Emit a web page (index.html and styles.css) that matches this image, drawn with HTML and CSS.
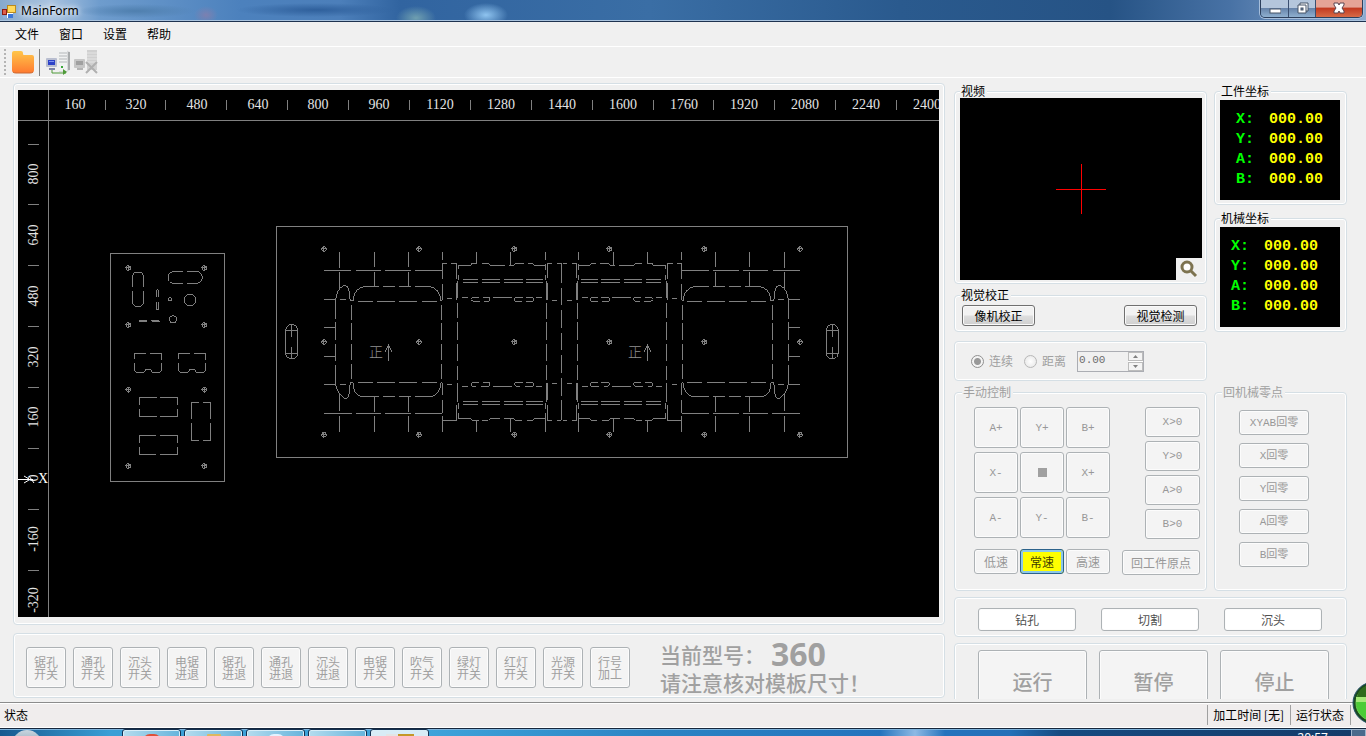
FILE: index.html
```html
<!DOCTYPE html>
<html lang="zh-CN">
<head>
<meta charset="utf-8">
<title>MainForm</title>
<link rel="stylesheet" href="styles.css">
</head>
<body>
<header class="titlebar">
  <svg class="app-icon" width="14" height="14" viewBox="0 0 14 14" aria-hidden="true">
    <rect x="5" y="0" width="9" height="8" fill="#b98a1d"/><rect x="6" y="1" width="7" height="6" fill="#ffd95a"/>
    <rect x="0" y="4" width="5" height="6" fill="#8d1c10"/><rect x="1" y="5" width="3" height="4" fill="#e0604a"/>
    <rect x="5" y="8" width="6" height="5" fill="#fff"/><rect x="6" y="9" width="5" height="4" fill="#3c78d8"/>
    <path d="M1 11h3v2h-3zM12 9h2v2h-2z" fill="#8fb1de"/>
  </svg>
  <h1 class="title">MainForm</h1>
  <div class="window-buttons">
    <button class="wb wb-min" aria-label="最小化"><svg width="12" height="18" viewBox="0 0 12 18"><rect x="1" y="9" width="11" height="4" fill="#fff" stroke="#465468"/></svg></button>
    <button class="wb wb-max" aria-label="还原"><svg width="13" height="18" viewBox="0 0 13 18"><path d="M4 3h8v8h-2v2H2V5h2z" fill="#fff" stroke="#465468"/><path d="M4 5h6v6" fill="none" stroke="#465468"/><rect x="5" y="8" width="2" height="2" fill="#7890b0" stroke="#465468"/></svg></button>
    <button class="wb wb-close" aria-label="关闭"><svg width="14" height="18" viewBox="0 0 14 18"><path d="M2 3h4l1 2 1-2h4v2l-2 3 2 3v2H8l-1-2-1 2H2v-2l2-3-2-3z" fill="#fff" stroke="#5b4450"/></svg></button>
  </div>
</header>

<nav class="menubar">
  <button>文件</button><button>窗口</button><button>设置</button><button>帮助</button>
</nav>

<div class="toolbar">
  <span class="grip"></span>
  <button class="tool" aria-label="打开"><svg width="24" height="26" viewBox="0 0 24 26">
    <defs><linearGradient id="fold" x1="0" y1="0" x2="0" y2="1"><stop offset="0" stop-color="#ffc64a"/><stop offset="1" stop-color="#ff7a30"/></linearGradient></defs>
    <path d="M1 4q0-2 2-2h7q2 0 2 2v1q0 1 1 1h8q2 0 2 2v13q0 3-3 3H4q-3 0-3-3z" fill="url(#fold)"/><path d="M2 23q1 1 3 1h14q2 0 3-1" fill="none" stroke="#c96a35"/></svg></button>
  <span class="tool-sep"></span>
  <button class="tool" aria-label="连接"><svg width="26" height="26" viewBox="0 0 26 26">
    <path d="M14 1h7l4 2v18l-3 2h-8z" fill="#d8dadb"/><path d="M14 1h8v21h-8z" fill="#f0f2f2"/><path d="M14 4h8M14 7h8M14 10h8M14 13h8" stroke="#b4b8ba"/><path d="M24 3v18" stroke="#a8acad" stroke-width="2"/>
    <rect x="1" y="9" width="11" height="9" rx="1" fill="#b9bed0"/><rect x="3" y="11" width="7" height="5" fill="#2d42c8"/><path d="M4 12h5v1H4z" fill="#7f93f0"/><path d="M4 19h6v2H4z" fill="#7d84a8"/>
    <path d="M7 21v3h14" fill="none" stroke="#4e9a38"/><path d="M18 20l4 3-4 3z" fill="#4e9a38"/><path d="M16 17h2v2h-2z" fill="#38a838"/></svg></button>
  <button class="tool" disabled aria-label="断开"><svg width="26" height="26" viewBox="0 0 26 26">
    <path d="M14 1h10v20H14z" fill="#d0d0d0"/><path d="M14 4h10M14 7h10M14 10h10M14 13h10" stroke="#e4e4e4"/>
    <rect x="1" y="10" width="11" height="9" rx="1" fill="#c6c6c6"/><rect x="3" y="12" width="7" height="4" fill="#a0a0a0"/><path d="M4 19h6v2H4z" fill="#b4b4b4"/>
    <path d="M13 13l11 11M24 13L13 24" stroke="#b0b0b0" stroke-width="2"/></svg></button>
</div>

<main class="main">
  <section class="left">
    <div class="group canvas-group">
      <svg class="canvas" viewBox="18 90 921 527" preserveAspectRatio="xMinYMin meet" role="img" aria-label="加工图">
        <defs>
          <g id="hole"><circle r="7"/><path d="M-9 0H9M0-9V9"/></g>
          <g id="half">
            <path d="M208 96V144M208 157V208M313 96V142M313 157V198M415 96V142M415 157V198M517 96V121M517 133V178M517 193V241M619 96V130M721 96V136M826 96V121M826 133V150M826 164V180"/>
            <path d="M208 523V573M208 588V635M313 530V576M313 588V635M415 530V576M415 588V635M517 490V525M517 539V578M517 588V635M619 602V635M721 596V635M826 550V568M826 578V635"/>
            <path d="M162 151H243M258 151H333M345 151H423M435 151H517M162 580H246M258 580H333M345 580H423M435 580H517"/>
            <path d="M162 238H197M210 238H228M162 322H197M162 409H197M162 493H197M210 493H228"/>
            <path d="M197 297V238Q202 206 219 198Q238 190 238 226L241 243H250M197 306V360M197 372V423M197 435V493Q203 524 225 536Q238 536 238 510L241 488H250"/>
            <path d="M249 244Q251 201 290 199H327M339 199H375M387 199H423M435 199H477Q512 206 512 242H517"/>
            <path d="M249 488Q250 524 273 529H327M339 529H375M387 529H423M435 529H488Q511 520 513 488H517"/>
            <path d="M264 244H309M321 244H375M387 244H441M456 244H502M264 487H309M321 487H375M387 487H441M456 487H502"/>
            <path d="M244 255V300M244 309V360M244 372V420M244 432V477M514 255V300M514 309V360M514 372V420M514 432V477"/>
            <path d="M531 235H546M531 493H546M517 130H531M543 130H560V178M560 190V240M517 601H560V555"/>
            <path d="M562 183V234M562 250V293M562 306V360M562 372V423M562 438V480M562 490V547M565 164V180M565 550V568"/>
            <path d="M565 148V136H603L606 130H622M636 130H655L660 136H706M718 136H733L736 130H762M774 130H788L791 136H826"/>
            <path d="M565 578V596H603L606 601H627M636 601H655L660 596H690M702 596H733L736 601H756M771 601H788L791 596H826"/>
            <path d="M579 178H624M636 178H690M702 178H759M768 178H819M579 187H624M636 187H690M702 187H759M768 187H819"/>
            <path d="M579 544H624M636 544H690M702 544H759M768 544H819M579 553H624M636 553H690M702 553H759M768 553H819"/>
            <path d="M576 232H594M669 232H726M798 232H816M576 499H594M669 499H726M798 499H816"/>
            <path d="M627 232H609L602 238L609 244H630M639 232H657L660 235V241L657 244H642M759 232H736L733 235V241L736 244H756M768 232H788L792 238L788 244H768"/>
            <path d="M627 487H607L604 490V496L607 499H618M639 487H657L660 490V496L657 499H633M759 487H736L733 490L738 499H750M768 487H788L792 493L788 499H765"/>
            <path d="M829 183V240M829 250V297M829 306V360M829 372V423M829 435V480M829 490V545M832 130V174M832 190V240M832 490V540M832 555V601"/>
            <path d="M832 130H846M860 130H872M846 241H861M846 490H861M832 601H846M860 601H872"/>
            <path d="M47 331Q49 314 65 314Q81 314 83 331V400Q81 416 65 416Q49 416 47 400zM47 331H83M47 400H83M65 314V350M65 380V418"/>
          </g>
        </defs>
        <g class="axis">
          <path d="M18 120.500H939M48.500 90V617"/>
          <path d="M105.500 100v10M165.500 100v10M226.500 100v10M287.500 100v10M348.500 100v10M409.500 100v10M470.500 100v10M531.500 100v10M592.500 100v10M653.500 100v10M713.500 100v10M774.500 100v10M835.500 100v10M896.500 100v10"/>
          <path d="M28 144.500h11M28 204.500h11M28 265.500h11M28 326.500h11M28 387.500h11M28 448.500h11M28 509.500h11M28 570.500h11"/>
        </g>
        <g class="scale">
          <text x="75" y="109">160</text><text x="136" y="109">320</text><text x="197" y="109">480</text><text x="258" y="109">640</text><text x="318" y="109">800</text><text x="379" y="109">960</text><text x="440" y="109">1120</text><text x="501" y="109">1280</text><text x="562" y="109">1440</text><text x="623" y="109">1600</text><text x="684" y="109">1760</text><text x="744" y="109">1920</text><text x="805" y="109">2080</text><text x="866" y="109">2240</text><text x="927" y="109">2400</text>
        </g>
        <g class="scale" transform="rotate(-90)">
          <text x="-174" y="38">800</text><text x="-235" y="38">640</text><text x="-296" y="38">480</text><text x="-357" y="38">320</text><text x="-417" y="38">160</text><text x="-478" y="38">0</text><text x="-539" y="38">-160</text><text x="-600" y="38">-320</text>
        </g>
        <path class="origin" d="M18 479.500H33M24 476l5 3M24 483l5-3M29 476l5 7"/>
        <text class="origin-label" x="43" y="483">X</text>

        <g class="part" transform="translate(100 240) scale(.33333)">
          <path d="M31 40H374V724H31z"/>
          <use href="#hole" x="85" y="84"/><use href="#hole" x="313" y="84"/><use href="#hole" x="85" y="255"/><use href="#hole" x="313" y="255"/>
          <use href="#hole" x="85" y="449"/><use href="#hole" x="313" y="449"/><use href="#hole" x="85" y="678"/><use href="#hole" x="313" y="678"/>
          <path d="M97 140V112Q98 96 114 96Q130 96 131 112V140M97 153V183Q99 200 114 200Q129 200 131 183V153"/>
          <path d="M249 94H221Q205 97 204 112Q205 128 221 130H249M261 94H290Q306 97 307 112Q306 128 290 130H261"/>
          <path d="M169 172V152L173 149L176 152V172M169 186V208H176V186"/>
          <circle cx="210" cy="178" r="5"/><circle cx="270" cy="180" r="17"/><circle cx="219" cy="238" r="11"/>
          <path d="M117 241H141M117 244H141M154 241H177M156 244H180"/>
          <path d="M103 357V340H138M150 340H185V360M103 370V391L110 397H133L138 388H152L157 397H178L185 391V370"/>
          <path d="M235 357V340H270M282 340H317V360M235 370V391L242 397H265L270 388H284L289 397H310L317 391V370"/>
          <path d="M118 495V472H171M180 472H233V495M118 507V529H171M180 529H233V507"/>
          <path d="M118 609V586H168M180 586H233V609M118 621V643H168M180 643H233V621"/>
          <path d="M274 537V487H297M309 487H332V537M274 549V601H297M309 601H332V549"/>
        </g>

        <g class="part" transform="translate(270 220) scale(.33333)">
          <path d="M19 19H1733V713H19z"/>
          <use href="#half"/>
          <use href="#half" transform="translate(1752 0) scale(-1 1)"/>
          <path d="M875 130V188M875 205V255M875 270V323M875 339V390M875 405V458M875 475V527M875 541V601"/>
          <use href="#hole" x="162" y="87"/><use href="#hole" x="447" y="87"/><use href="#hole" x="733" y="87"/><use href="#hole" x="1018" y="87"/><use href="#hole" x="1303" y="87"/><use href="#hole" x="1590" y="87"/>
          <use href="#hole" x="162" y="366"/><use href="#hole" x="447" y="366"/><use href="#hole" x="733" y="366"/><use href="#hole" x="1018" y="366"/><use href="#hole" x="1303" y="366"/><use href="#hole" x="1590" y="366"/>
          <use href="#hole" x="162" y="644"/><use href="#hole" x="447" y="644"/><use href="#hole" x="733" y="644"/><use href="#hole" x="1018" y="644"/><use href="#hole" x="1303" y="644"/><use href="#hole" x="1590" y="644"/>
          <path d="M355 423V373M345 395L355 376L366 395M1132 423V373M1122 395L1132 376L1143 395"/>
        </g>
        <g class="mark"><text x="376" y="357">正</text><text x="635" y="357">正</text></g>
      </svg>
    </div>

    <div class="group switch-group">
      <div class="switches">
        <button disabled>锯孔<br>开关</button><button disabled>通孔<br>开关</button><button disabled>沉头<br>开关</button><button disabled>电锯<br>进退</button><button disabled>锯孔<br>进退</button><button disabled>通孔<br>进退</button><button disabled>沉头<br>进退</button><button disabled>电锯<br>开关</button><button disabled>吹气<br>开关</button><button disabled>绿灯<br>开关</button><button disabled>红灯<br>开关</button><button disabled>光源<br>开关</button><button disabled>行号<br>加工</button>
      </div>
      <div class="notice">
        <p>当前型号：<strong>360</strong></p>
        <p>请注意核对模板尺寸！</p>
      </div>
    </div>
  </section>

  <section class="right">
    <div class="row">
      <div class="col-a">
        <fieldset class="video-group">
          <legend>视频</legend>
          <div class="video">
            <svg class="cross" width="50" height="50" viewBox="0 0 50 50" aria-hidden="true"><path d="M0 25.500H50M25.500 0V50"/></svg>
            <button class="zoom-btn" aria-label="放大"><svg width="18" height="18" viewBox="0 0 18 18"><circle cx="7" cy="7" r="5" fill="#fff" stroke="#7d7350" stroke-width="3"/><path d="M11 11l5 5" stroke="#7d7350" stroke-width="3"/></svg></button>
          </div>
        </fieldset>
        <fieldset class="calib">
          <legend>视觉校正</legend>
          <div class="calib-row"><button class="btn">像机校正</button><button class="btn">视觉检测</button></div>
        </fieldset>
      </div>
      <div class="col-b">
        <fieldset class="coords"><legend>工件坐标</legend>
          <dl class="readout"><dt>X:</dt><dd>000.00</dd><dt>Y:</dt><dd>000.00</dd><dt>A:</dt><dd>000.00</dd><dt>B:</dt><dd>000.00</dd></dl>
        </fieldset>
        <fieldset class="coords"><legend>机械坐标</legend>
          <dl class="readout machine"><dt>X:</dt><dd>000.00</dd><dt>Y:</dt><dd>000.00</dd><dt>A:</dt><dd>000.00</dd><dt>B:</dt><dd>000.00</dd></dl>
        </fieldset>
      </div>
    </div>

    <div class="group step-group">
      <label><input type="radio" name="step" checked disabled>连续</label>
      <label><input type="radio" name="step" disabled>距离</label>
      <div class="spin">
        <input type="text" value="0.00" disabled aria-label="距离值">
        <div class="spin-btns"><button disabled aria-label="增加"><svg width="5" height="3" viewBox="0 0 5 3"><path d="M0 3L2.500 0L5 3z"/></svg></button><button disabled aria-label="减少"><svg width="5" height="3" viewBox="0 0 5 3"><path d="M0 0L2.500 3L5 0z"/></svg></button></div>
      </div>
    </div>

    <div class="row">
      <fieldset class="jog">
        <legend>手动控制</legend>
        <div class="jog-body">
          <div class="jog-left">
            <div class="jog-pad">
              <button disabled>A+</button><button disabled>Y+</button><button disabled>B+</button>
              <button disabled>X-</button><button disabled aria-label="停"><span class="stop"></span></button><button disabled>X+</button>
              <button disabled>A-</button><button disabled>Y-</button><button disabled>B-</button>
            </div>
            <div class="speeds"><button disabled>低速</button><button class="active">常速</button><button disabled>高速</button></div>
          </div>
          <div class="jog-right">
            <button disabled>X&gt;0</button><button disabled>Y&gt;0</button><button disabled>A&gt;0</button><button disabled>B&gt;0</button>
            <button class="origin-btn" disabled>回工件原点</button>
          </div>
        </div>
      </fieldset>
      <fieldset class="home">
        <legend>回机械零点</legend>
        <div class="home-list">
          <button disabled>XYAB回零</button><button disabled>X回零</button><button disabled>Y回零</button><button disabled>A回零</button><button disabled>B回零</button>
        </div>
      </fieldset>
    </div>

    <div class="group modes"><button disabled>钻孔</button><button disabled>切割</button><button disabled>沉头</button></div>
    <div class="group runs"><button disabled>运行</button><button disabled>暂停</button><button disabled>停止</button></div>
  </section>
</main>

<footer class="status">
  <span class="status-text">状态</span><span class="cell">加工时间 [无]</span><span class="cell">运行状态</span><span class="cell end"></span>
</footer>

<div class="taskbar">
  <span class="orb"></span>
  <div class="tasks">
    <span class="task"><i class="t-red"></i></span><span class="task"><i class="t-folder"></i></span><span class="task"><i class="t-blue"></i></span><span class="task"></span><span class="task on"><i class="t-win"></i></span>
  </div>
  <span class="clock">20:57</span><span class="desk"></span>
</div>
<svg class="ball" width="14" height="44" viewBox="0 0 14 44" aria-hidden="true">
  <circle cx="22" cy="22" r="21" fill="#1c4a20" stroke="#24506a"/><circle cx="22" cy="22" r="18" fill="#4ccc36" stroke="#6ad050"/>
  <path d="M5 16Q7 7 14 5V16z" fill="#2f6b1c"/><path d="M4 16H14V21H4z" fill="#a5ea78"/>
</svg>
</body>
</html>
```
FILE: styles.css
```css
* { box-sizing: border-box; }
body {
  margin: 0;
  height: 100vh;
  display: flex;
  flex-direction: column;
  position: relative;
  overflow: hidden;
  background: #f0f0f0;
  color: #000;
  font: 12px/14px "Noto Sans CJK SC", sans-serif;
}
button, input {
  font: inherit;
  color: inherit;
  margin: 0;
  padding: 0;
}
p, dl, dd, h1 { margin: 0; }
svg { display: block; }

/* title bar */
.titlebar {
  height: 22px;
  flex: none;
  display: flex;
  align-items: flex-start;
  padding: 0 3px 0 2px;
  border-bottom: 1px solid #1f3350;
  box-shadow: inset 0 -1px 0 #a9c3de;
  background:
    radial-gradient(ellipse 20px 12px at 416px 18px, #6f9fb0, transparent),
    radial-gradient(ellipse 22px 12px at 486px 15px, #8fc4f0, transparent),
    radial-gradient(ellipse 12px 9px at 206px 15px, #7c80b0, transparent),
    radial-gradient(ellipse 60px 7px at 136px 11px, #4f7fae, transparent),
    radial-gradient(ellipse 80px 7px at 316px 10px, #2f609c, transparent),
    linear-gradient(90deg, #86a9cc 0, #a9c3e0 50px, #6e9ccd 100px, #4c81bd 240px, #4c7fba 340px, #3164a0 400px, #3a6ea5 650px, #2a5a8e 900px, #265385 1110px, #4872a5 1230px, #8fabd0 100%);
}
.app-icon { margin-top: 5px; }
.title {
  flex: 1;
  margin: 3px 0 0 5px;
  font: 12px/16px "Noto Sans", sans-serif;
  text-shadow: 0 0 5px #fff, 0 0 8px #fff;
}
.window-buttons {
  display: flex;
  height: 18px;
  border: 1px solid #2c3f5c;
  border-top: 0;
  border-radius: 0 0 5px 5px;
  box-shadow: 0 0 0 1px #a6bedb;
  overflow: hidden;
}
.wb {
  width: 28px;
  border: 0;
  border-right: 1px solid #3a4f70;
  background: linear-gradient(#b4c6dc 0 45%, #6784aa 50%, #8fb0d0);
  display: flex;
  justify-content: center;
}
.wb-max { width: 27px; }
.wb-close { width: 46px; border-right: 0; background: linear-gradient(#e5a496 0 40%, #c33c22 50%, #d86a46); }

/* menu and tool bar */
.menubar {
  height: 25px;
  flex: none;
  display: flex;
  padding: 0 5px;
  border-bottom: 1px solid #fff;
}
.menubar button { border: 0; background: none; padding: 0 10px; }
.toolbar {
  height: 31px;
  flex: none;
  display: flex;
  align-items: center;
  padding: 0 0 0 4px;
  border-bottom: 1px solid #fff;
}
.grip { width: 2px; height: 26px; margin-right: 5px; background: repeating-linear-gradient(#b4b4b4 0 2px, transparent 2px 4px); }
.tool { border: 0; background: none; margin-right: 2px; }
.tool-sep { width: 1px; height: 27px; margin: 0 5px 0 2px; background: #808080; }

/* work area */
.main {
  flex: 1;
  min-height: 0;
  display: flex;
  gap: 9px;
  padding: 5px 19px 3px 13px;
}
.left {
  flex: 1;
  min-width: 0;
  display: flex;
  flex-direction: column;
  gap: 8px;
  padding-bottom: 1px;
}
.right {
  flex: none;
  width: 393px;
  min-height: 0;
  padding-top: 1px;
  overflow: hidden;
}
.group, fieldset {
  border: 1px solid #d5dfe5;
  border-radius: 4px;
  box-shadow: inset 0 0 0 1px #fff;
}
fieldset { margin: 0; min-width: 0; padding: 0 5px; }
legend { padding: 0 2px 0 1px; line-height: 14px; background: #f0f0f0; }

.canvas-group { flex: 1; min-height: 0; padding: 6px 5px 7px 4px; }
.canvas { width: 100%; height: 100%; background: #000; }
.axis, .part { fill: none; stroke: #808080; shape-rendering: crispEdges; }
.part { stroke-width: 3px; }
.scale { fill: #e4e4e4; font: 14px "Liberation Serif", serif; text-anchor: middle; }
.mark { fill: #909090; font: 300 14px "Noto Sans CJK SC", sans-serif; text-anchor: middle; }
.origin { fill: none; stroke: #fff; }
.origin-label { fill: #fff; font: 14px "Liberation Serif", serif; text-anchor: middle; }

/* disabled push buttons */
.switches button, .jog button, .home button, .modes button, .runs button {
  border: 1px solid #adb2b5;
  border-radius: 3px;
  background: #f4f4f4;
  box-shadow: inset 0 0 0 1px #fcfcfc;
  color: #a0a0a0;
}
.switch-group {
  display: flex;
  align-items: center;
  gap: 30px;
  height: 65px;
  padding: 6px 12px 2px;
}
.switches { display: flex; gap: 7px; }
.switches button { width: 40px; height: 41px; line-height: 12px; white-space: nowrap; }
.notice { color: #a0a0a0; font-size: 21px; font-weight: 500; line-height: 28px; white-space: nowrap; }
.notice p { display: flex; align-items: center; height: 28px; }
.notice strong { margin-left: 6px; font: bold 32px/28px "Noto Sans", sans-serif; }

/* right column */
.row { display: flex; gap: 7px; }
.col-a { width: 253px; display: flex; flex-direction: column; gap: 4px; }
.col-b { width: 133px; display: flex; flex-direction: column; gap: 6px; }
.video-group { padding: 0 4px 3px 5px; }
.video {
  position: relative;
  height: 182px;
  background: #000;
  display: flex;
  align-items: center;
  justify-content: center;
}
.cross { stroke: #f00; shape-rendering: crispEdges; }
.zoom-btn {
  position: absolute;
  right: 0;
  bottom: 0;
  width: 26px;
  height: 22px;
  border: 0;
  background: #f0f0f0;
  display: flex;
  align-items: center;
  justify-content: center;
}
.calib-row { display: flex; justify-content: space-between; padding: 3px 4px 5px 2px; }
.btn {
  width: 73px;
  height: 21px;
  border: 1px solid #707070;
  border-radius: 3px;
  background: linear-gradient(#f2f2f2 0 45%, #dddddd 55%, #cfcfcf);
  box-shadow: inset 0 0 0 1px #fafafa;
}
.coords { padding: 2px 6px 4px 5px; }
.readout {
  height: 100px;
  padding: 10px 0 0 16px;
  background: #000;
  display: grid;
  grid-template-columns: 33px 1fr;
  grid-auto-rows: 20px;
  font: bold 15px/20px "Liberation Mono", monospace;
}
.readout.machine { padding-left: 11px; }
.readout dt { color: #0f0; }
.readout dd { color: #ff0; }

.step-group {
  width: 253px;
  height: 40px;
  margin: 9px 0 4px;
  padding: 0 16px;
  display: flex;
  align-items: center;
  color: #a0a0a0;
}
.step-group label { display: flex; align-items: center; margin-right: 11px; }
.step-group input[type="radio"] {
  appearance: none;
  width: 13px;
  height: 13px;
  margin-right: 5px;
  border: 1px solid #b8b8b8;
  border-radius: 50%;
  background: radial-gradient(#fff, #e4e4e4);
}
.step-group input[type="radio"]:checked { border-color: #909090; background: radial-gradient(#999 0 3px, #f4f4f4 4px); }
.spin {
  width: 67px;
  height: 21px;
  border: 1px solid #abadb3;
  display: flex;
  background: #fff;
}
.spin input {
  flex: 1;
  min-width: 0;
  border: 0;
  background: #f0f0f0;
  color: #6d6d6d;
  padding: 0 0 3px 1px;
  font: 11px/14px "Liberation Mono", monospace;
}
.spin-btns { width: 15px; display: flex; flex-direction: column; gap: 1px; }
.spin-btns button {
  flex: 1;
  border: 1px solid #bcbcbc;
  background: #f4f4f4;
  display: flex;
  align-items: center;
  justify-content: center;
}
.spin-btns path { fill: #808080; }

.jog, .home { color: #a0a0a0; }
.jog { width: 253px; padding: 0 6px 0 7px; }
.jog-body { display: flex; justify-content: space-between; padding: 8px 0 15px 12px; }
.jog button, .home button { font: 11px/14px "Liberation Mono", "Noto Sans CJK SC", monospace; color: #989898; }
.jog-left { display: flex; flex-direction: column; gap: 11px; }
.jog-pad { display: grid; grid-template-columns: repeat(3, 44px); grid-auto-rows: 41px; gap: 4px 2px; }
.stop { display: block; width: 9px; height: 9px; margin: 0 auto; background: #a0a0a0; }
.speeds { display: grid; grid-template-columns: repeat(3, 44px); gap: 2px; }
.jog .speeds button, .jog .origin-btn { height: 25px; font: 12px/14px "Noto Sans CJK SC", sans-serif; }
.jog .speeds .active {
  border: 1px solid #2c628b;
  background: #ff0;
  color: #404000;
  box-shadow: inset 0 0 0 2px #8cc8e8;
}
.jog-right { display: flex; flex-direction: column; align-items: flex-end; gap: 4px; }
.jog-right button { width: 55px; height: 30px; }
.jog .origin-btn { width: 78px; margin-top: 7px; }
.home { width: 133px; padding: 0 7px; }
.home-list { display: flex; flex-direction: column; gap: 8px; padding: 11px 0 0 17px; }
.home button { width: 70px; height: 25px; white-space: nowrap; }

.modes { margin: 6px 0; height: 40px; padding: 10px 23px; display: flex; gap: 25px; }
.modes button { width: 98px; height: 23px; background: #fff; color: #505050; }
.runs { height: 90px; padding: 6px 0 0 23px; display: flex; gap: 12px; }
.runs button { width: 109px; height: 64px; font-size: 20px; font-weight: 500; line-height: 24px; }

/* status bar and task bar */
.status {
  height: 26px;
  flex: none;
  display: flex;
  align-items: center;
  padding: 0 0 0 4px;
  border-top: 1px solid #8c8c8c;
  border-bottom: 1px solid #fff;
  box-shadow: inset 0 1px 0 #fff;
  background: #f0eded;
}
.status-text { flex: 1; }
.cell { height: 20px; padding: 0 6px 0 5px; border-left: 1px solid #a0a0a0; line-height: 20px; white-space: nowrap; }
.cell.end { width: 16px; padding: 0; }
.taskbar {
  height: 8px;
  flex: none;
  display: flex;
  overflow: hidden;
  border-top: 1px solid #16273d;
  box-shadow: inset 0 1px 0 #7fb4dc;
  background: linear-gradient(90deg, #17598f 0, #3a9fd6 110px, #3ea3da 430px, #2c84c4 650px, #2473bd 880px, #8db9e4 915px, #2473bd 945px, #2470b8 1010px, #164a80 1060px, #143a68 100%);
}
.orb { width: 30px; height: 30px; margin: 1px 80px 0 12px; flex: none; border-radius: 50%; background: linear-gradient(#c9d6e0, #56748c); }
.tasks { flex: 1; display: flex; gap: 3px; }
.task {
  width: 59px;
  height: 30px;
  border: 1px solid #143050;
  border-radius: 3px;
  background: linear-gradient(90deg, #b4dcee, #66b4dc);
  box-shadow: inset 0 0 0 1px #d8eef8;
}
.task.on { background: #d8ecf6; }
.task i { display: block; width: 18px; height: 18px; margin: 4px auto 0; border-radius: 7px; }
.t-red { background: #e05038; }
.task .t-folder { width: 14px; background: #dcb860; border-radius: 1px; }
.t-blue { background: #e4f2ff; }
.task .t-win { width: 28px; background: linear-gradient(90deg, #e4e4e4 12px, #c49828 12px); border-radius: 0; }
.clock { margin-right: 23px; padding-top: 2px; color: #fff; font: 12px/14px "Noto Sans", sans-serif; }
.desk { width: 15px; height: 30px; border: 1px solid #9db4cc; background: #4a6a8c; }
.ball { position: absolute; right: 0; bottom: 11px; }
```
